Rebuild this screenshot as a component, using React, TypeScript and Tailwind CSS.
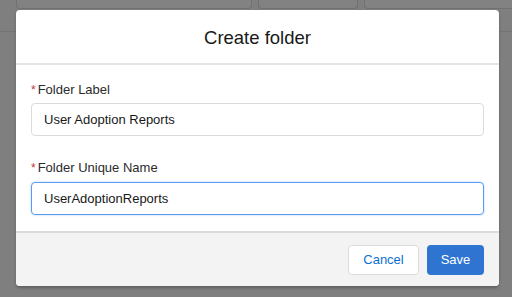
export default function App() {
  return (
    <div
      className="relative w-[512px] h-[297px] overflow-hidden bg-[#7f7f7f]"
      style={{ fontFamily: '"Liberation Sans", Arial, sans-serif' }}
    >
      {/* dimmed page behind the modal */}
      <div className="flex gap-[6px] pl-[16px] h-[9px]">
        <div className="w-[236px] h-full rounded-b-[4px] border border-t-0 border-[#707070] bg-[#828282]" />
        <div className="w-[100px] h-full rounded-b-[4px] border border-t-0 border-[#707070] bg-[#828282]" />
        <div className="flex-1 h-full rounded-bl-[4px] border border-t-0 border-r-0 border-[#707070] bg-[#828282]" />
      </div>
      <div className="mt-[22px] h-px bg-[#747474]" />

      {/* modal */}
      <div className="absolute left-[16px] top-[10px] w-[483px] rounded-[4px] bg-white overflow-hidden shadow-[0_2px_3px_rgba(0,0,0,0.25)]">
        <div className="h-[55px] flex items-center justify-center border-b-2 border-[#e5e5e5]">
          <h2 className="text-[18.5px] text-[#181818] pt-[2px]">Create folder</h2>
        </div>

        <div className="px-[15px] pt-[16px] pb-[16px]">
          <label className="flex items-center h-[18px] text-[13px] text-[#2b2b2b]">
            <span className="text-[#c23934] mr-[2px] text-[12px] leading-none">*</span>
            Folder Label
          </label>
          <div className="mt-[4px] h-[33px] flex items-center px-[12px] rounded-[4px] border border-[#dddbda] text-[13px] text-[#181818]">
            User Adoption Reports
          </div>

          <label className="mt-[23px] flex items-center h-[18px] text-[13px] text-[#2b2b2b]">
            <span className="text-[#c23934] mr-[2px] text-[12px] leading-none">*</span>
            Folder Unique Name
          </label>
          <div className="mt-[5px] h-[33px] flex items-center px-[12px] rounded-[4px] border border-[#5b9cf2] shadow-[0_0_2px_#9cc3f7] text-[13px] text-[#181818]">
            UserAdoptionReports
          </div>
        </div>

        <div className="h-[55px] flex items-center justify-end gap-[8px] pr-[15px] border-t-2 border-[#dddbda] bg-[#f3f3f3]">
          <button className="w-[71px] h-[30px] rounded-[4px] border border-[#dddbda] bg-white text-[13px] text-[#0b6fd0]">
            Cancel
          </button>
          <button className="w-[57px] h-[30px] rounded-[4px] bg-[#2e74d0] text-[13px] text-white">
            Save
          </button>
        </div>
      </div>
    </div>
  );
}
